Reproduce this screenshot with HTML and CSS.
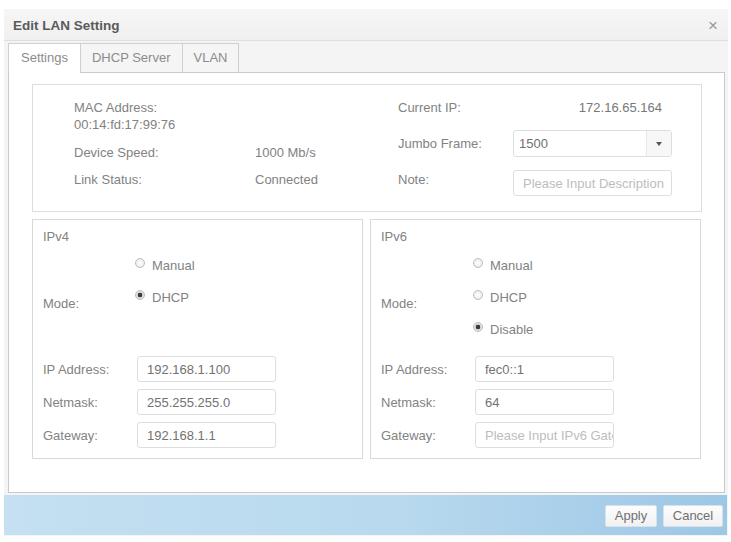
FILE: index.html
```html
<!DOCTYPE html>
<html>
<head>
<meta charset="utf-8">
<title>Edit LAN Setting</title>
<link rel="stylesheet" href="styles.css">
</head>
<body>
<div class="dialog">
  <div class="header">
    <span class="title">Edit LAN Setting</span>
    <span class="close">×</span>
  </div>
  <div class="tabs">
    <div class="tab active">Settings</div>
    <div class="tab">DHCP Server</div>
    <div class="tab">VLAN</div>
  </div>
  <div class="panel">
    <div class="info">
      <div class="info-left">
        <div class="mac">MAC Address:<br>00:14:fd:17:99:76</div>
        <div class="kv kv-speed"><span class="k">Device Speed:</span><span class="v">1000 Mb/s</span></div>
        <div class="kv"><span class="k">Link Status:</span><span class="v">Connected</span></div>
      </div>
      <div class="info-right">
        <div class="row r-ip"><span class="k2">Current IP:</span><span class="ipval">172.16.65.164</span></div>
        <div class="row r-jumbo"><span class="k2">Jumbo Frame:</span>
          <div class="select"><span class="sel-text">1500</span><span class="sel-btn"><span class="caret"></span></span></div>
        </div>
        <div class="row r-note"><span class="k2 k-note">Note:</span><input class="field note" placeholder="Please Input Description"></div>
      </div>
    </div>
    <div class="ipboxes">
      <div class="ipbox">
        <div class="box-title">IPv4</div>
        <div class="mode">
          <div class="mode-label">Mode:</div>
          <div class="radios">
            <label class="radio-row"><input type="radio" name="m4" class="radio"><span>Manual</span></label>
            <label class="radio-row"><input type="radio" name="m4" class="radio" checked><span>DHCP</span></label>
          </div>
        </div>
        <div class="fields">
          <div class="frow"><span class="flabel">IP Address:</span><input class="field ip" value="192.168.1.100"></div>
          <div class="frow"><span class="flabel">Netmask:</span><input class="field ip" value="255.255.255.0"></div>
          <div class="frow"><span class="flabel">Gateway:</span><input class="field ip" value="192.168.1.1"></div>
        </div>
      </div>
      <div class="ipbox">
        <div class="box-title">IPv6</div>
        <div class="mode">
          <div class="mode-label">Mode:</div>
          <div class="radios">
            <label class="radio-row"><input type="radio" name="m6" class="radio"><span>Manual</span></label>
            <label class="radio-row"><input type="radio" name="m6" class="radio"><span>DHCP</span></label>
            <label class="radio-row"><input type="radio" name="m6" class="radio" checked><span>Disable</span></label>
          </div>
        </div>
        <div class="fields">
          <div class="frow"><span class="flabel">IP Address:</span><input class="field ip" value="fec0::1"></div>
          <div class="frow"><span class="flabel">Netmask:</span><input class="field ip" value="64"></div>
          <div class="frow"><span class="flabel">Gateway:</span><input class="field ip" placeholder="Please Input IPv6 Gateway"></div>
        </div>
      </div>
    </div>
  </div>
  <div class="footer">
    <button class="btn btn-apply">Apply</button>
    <button class="btn btn-cancel">Cancel</button>
  </div>
</div>
</body>
</html>
```

FILE: styles.css
```css
* { box-sizing: border-box; }

html, body {
  margin: 0;
  padding: 0;
  background: #ffffff;
  font-family: "Liberation Sans", Arial, sans-serif;
  font-size: 13px;
  color: #828282;
}

.dialog {
  margin: 9px 0 0 4px;
  width: 724px;
  height: 527px;
  background: #f4f4f4;
}

.header {
  height: 32px;
  display: flex;
  align-items: center;
  justify-content: space-between;
  padding: 1px 10px 0 9px;
  background: linear-gradient(#f6f6f6, #f0f0f0);
  border-bottom: 1px solid #dedede;
}

.title {
  font-weight: bold;
  font-size: 13.5px;
  color: #5a5a5a;
}

.close {
  font-size: 17px;
  color: #9a9a9a;
  line-height: 1;
}

.tabs {
  height: 31px;
  display: flex;
  align-items: flex-end;
  padding-left: 4px;
  background: #f4f4f4;
}

.tab {
  height: 29px;
  line-height: 28px;
  padding: 0 11px;
  border: 1px solid #d0d0d0;
  border-bottom: none;
  border-left: none;
  color: #8c8c8c;
  background: #f5f5f5;
}

.tab:first-child {
  border-left: 1px solid #d0d0d0;
  padding: 0 12px;
}

.tab.active {
  background: #fff;
  height: 30px;
  margin-bottom: -1px;
  position: relative;
  z-index: 1;
}

.panel {
  margin: 0 3px 0 4px;
  height: 421px;
  background: #fff;
  border: 1px solid #cacaca;
  padding: 11px 0 0 23px;
}

.info {
  width: 670px;
  border: 1px solid #dddddd;
  padding: 14px 0 15px 0;
  display: flex;
}

.info-left {
  width: 365px;
  padding-left: 41px;
  line-height: 17px;
}

.mac {
  height: 45px;
}

.kv {
  display: flex;
  height: 17px;
}

.kv-speed {
  margin-bottom: 10px;
}

.k {
  width: 181px;
}

.info-right {
  width: 274px;
}

.row {
  display: flex;
  align-items: center;
}

.k2 {
  width: 115px;
}

.r-ip {
  height: 17px;
  line-height: 17px;
}

.ipval {
  flex: 1;
  text-align: right;
  padding-right: 10px;
  color: #787878;
}

.r-jumbo {
  margin-top: 14px;
  height: 27px;
}

.select {
  width: 159px;
  height: 27px;
  border: 1px solid #dedede;
  border-radius: 3px;
  display: flex;
  align-items: center;
  background: #fff;
}

.sel-text {
  flex: 1;
  padding-left: 5px;
  color: #707070;
}

.sel-btn {
  width: 25px;
  height: 100%;
  border-left: 1px solid #e8e8e8;
  background: #f7f7f7;
  display: flex;
  align-items: center;
  justify-content: center;
}

.caret {
  width: 0;
  height: 0;
  border-left: 3px solid transparent;
  border-right: 3px solid transparent;
  border-top: 4px solid #555;
}

.r-note {
  margin-top: 13px;
  height: 26px;
  align-items: flex-start;
}

.k-note {
  line-height: 17px;
  padding-top: 1px;
}

.field {
  height: 26px;
  border: 1px solid #dedede;
  border-radius: 3px;
  font-family: "Liberation Sans", Arial, sans-serif;
  font-size: 13px;
  color: #727272;
  padding: 0 0 0 9px;
  outline: none;
  background: #fff;
  margin: 0;
}

.field::placeholder {
  color: #bdbdbd;
}

.note {
  width: 159px;
}

.ipboxes {
  display: flex;
  gap: 7px;
  margin-top: 7px;
}

.ipbox {
  width: 331px;
  height: 240px;
  border: 1px solid #d8d8d8;
  padding: 8px 0 0 10px;
}

.box-title {
  line-height: 17px;
}

.mode {
  margin-top: 12px;
  height: 99px;
  display: flex;
}

.mode-label {
  width: 92px;
  padding-top: 38px;
  line-height: 17px;
}

.radios {
  display: flex;
  flex-direction: column;
  gap: 15px;
}

.radio-row {
  display: flex;
  align-items: flex-start;
  height: 17px;
  line-height: 17px;
}

.radio {
  appearance: none;
  -webkit-appearance: none;
  width: 10px;
  height: 10px;
  margin: 1px 7px 0 0;
  border: 1px solid #bdbdbd;
  border-radius: 50%;
  background: radial-gradient(circle, #fff 0, #e6e6e6 100%);
}

.radio:checked {
  background: radial-gradient(circle, #3a3a3a 0, #3a3a3a 2px, #d8d8d8 2.6px, #f2f2f2 100%);
}

.fields {
  display: flex;
  flex-direction: column;
  gap: 7px;
}

.frow {
  display: flex;
  align-items: center;
  height: 26px;
}

.flabel {
  width: 94px;
}

.ip {
  width: 139px;
}

.footer {
  margin: 2px 1px 0 0;
  height: 40px;
  background: linear-gradient(to right, #c4e0f1 0%, #b8d9ee 55%, #9dc7e6 100%);
  display: flex;
  align-items: center;
  justify-content: flex-end;
  gap: 6px;
  padding: 1px 4px 0 0;
}

.btn {
  height: 22px;
  border: 1px solid #d8e2ea;
  border-radius: 2px;
  background: linear-gradient(#fdfdfd, #f1f1f1);
  font-family: "Liberation Sans", Arial, sans-serif;
  font-size: 13px;
  color: #707070;
  padding: 0;
}

.btn-apply { width: 52px; }
.btn-cancel { width: 60px; }
```
